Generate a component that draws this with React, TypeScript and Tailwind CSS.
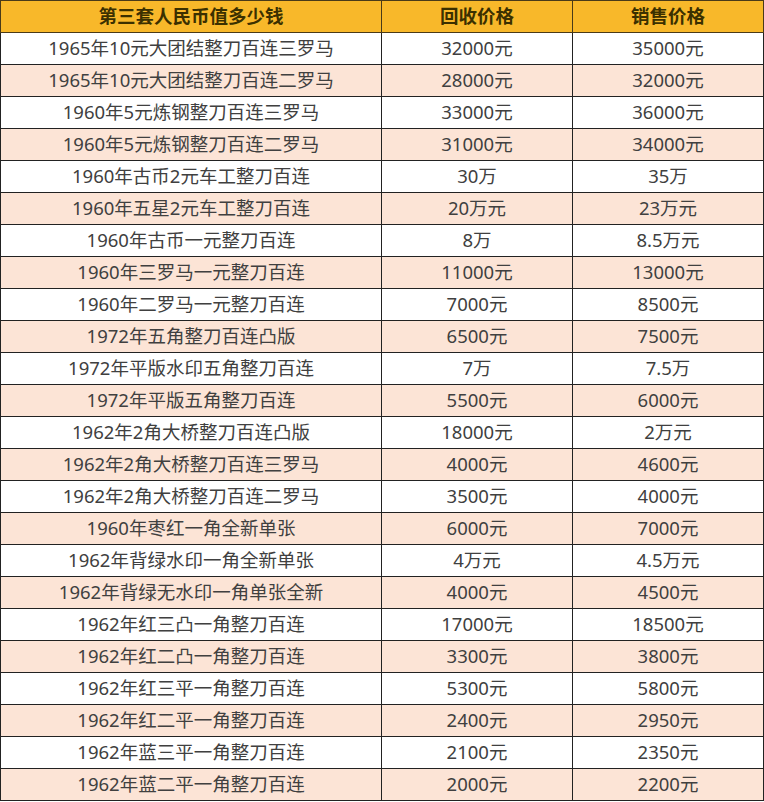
const rows: [string, string, string][] = [
  ['1965年10元大团结整刀百连三罗马', '32000元', '35000元'],
  ['1965年10元大团结整刀百连二罗马', '28000元', '32000元'],
  ['1960年5元炼钢整刀百连三罗马', '33000元', '36000元'],
  ['1960年5元炼钢整刀百连二罗马', '31000元', '34000元'],
  ['1960年古币2元车工整刀百连', '30万', '35万'],
  ['1960年五星2元车工整刀百连', '20万元', '23万元'],
  ['1960年古币一元整刀百连', '8万', '8.5万元'],
  ['1960年三罗马一元整刀百连', '11000元', '13000元'],
  ['1960年二罗马一元整刀百连', '7000元', '8500元'],
  ['1972年五角整刀百连凸版', '6500元', '7500元'],
  ['1972年平版水印五角整刀百连', '7万', '7.5万'],
  ['1972年平版五角整刀百连', '5500元', '6000元'],
  ['1962年2角大桥整刀百连凸版', '18000元', '2万元'],
  ['1962年2角大桥整刀百连三罗马', '4000元', '4600元'],
  ['1962年2角大桥整刀百连二罗马', '3500元', '4000元'],
  ['1960年枣红一角全新单张', '6000元', '7000元'],
  ['1962年背绿水印一角全新单张', '4万元', '4.5万元'],
  ['1962年背绿无水印一角单张全新', '4000元', '4500元'],
  ['1962年红三凸一角整刀百连', '17000元', '18500元'],
  ['1962年红二凸一角整刀百连', '3300元', '3800元'],
  ['1962年红三平一角整刀百连', '5300元', '5800元'],
  ['1962年红二平一角整刀百连', '2400元', '2950元'],
  ['1962年蓝三平一角整刀百连', '2100元', '2350元'],
  ['1962年蓝二平一角整刀百连', '2000元', '2200元'],
];

const App = () => {
  return (
    <div className="w-[764px] h-[802px] bg-white overflow-hidden">
      <table
        className="w-[763px] border-collapse table-fixed text-[18.5px] text-[#404040]"
        style={{ fontFamily: '"Noto Sans", "Noto Sans CJK SC", sans-serif' }}
      >
        <colgroup>
          <col className="w-[381px]" />
          <col className="w-[191px]" />
          <col className="w-[191px]" />
        </colgroup>
        <thead>
          <tr className="h-[32px] bg-[#f8b82a] text-[#3b3000]">
            <th className="border border-[#4a3a18] p-0 font-bold leading-none">第三套人民币值多少钱</th>
            <th className="border border-[#4a3a18] p-0 font-bold leading-none">回收价格</th>
            <th className="border border-[#4a3a18] p-0 font-bold leading-none">销售价格</th>
          </tr>
        </thead>
        <tbody>
          {rows.map((r, i) => (
            <tr key={i} className={`h-[32px] ${i % 2 === 1 ? 'bg-[#fce4d6]' : 'bg-white'}`}>
              <td className="border border-[#222] p-0 text-center leading-none">{r[0]}</td>
              <td className="border border-[#222] p-0 text-center leading-none">{r[1]}</td>
              <td className="border border-[#222] p-0 text-center leading-none">{r[2]}</td>
            </tr>
          ))}
        </tbody>
      </table>
    </div>
  );
};

export default App;
